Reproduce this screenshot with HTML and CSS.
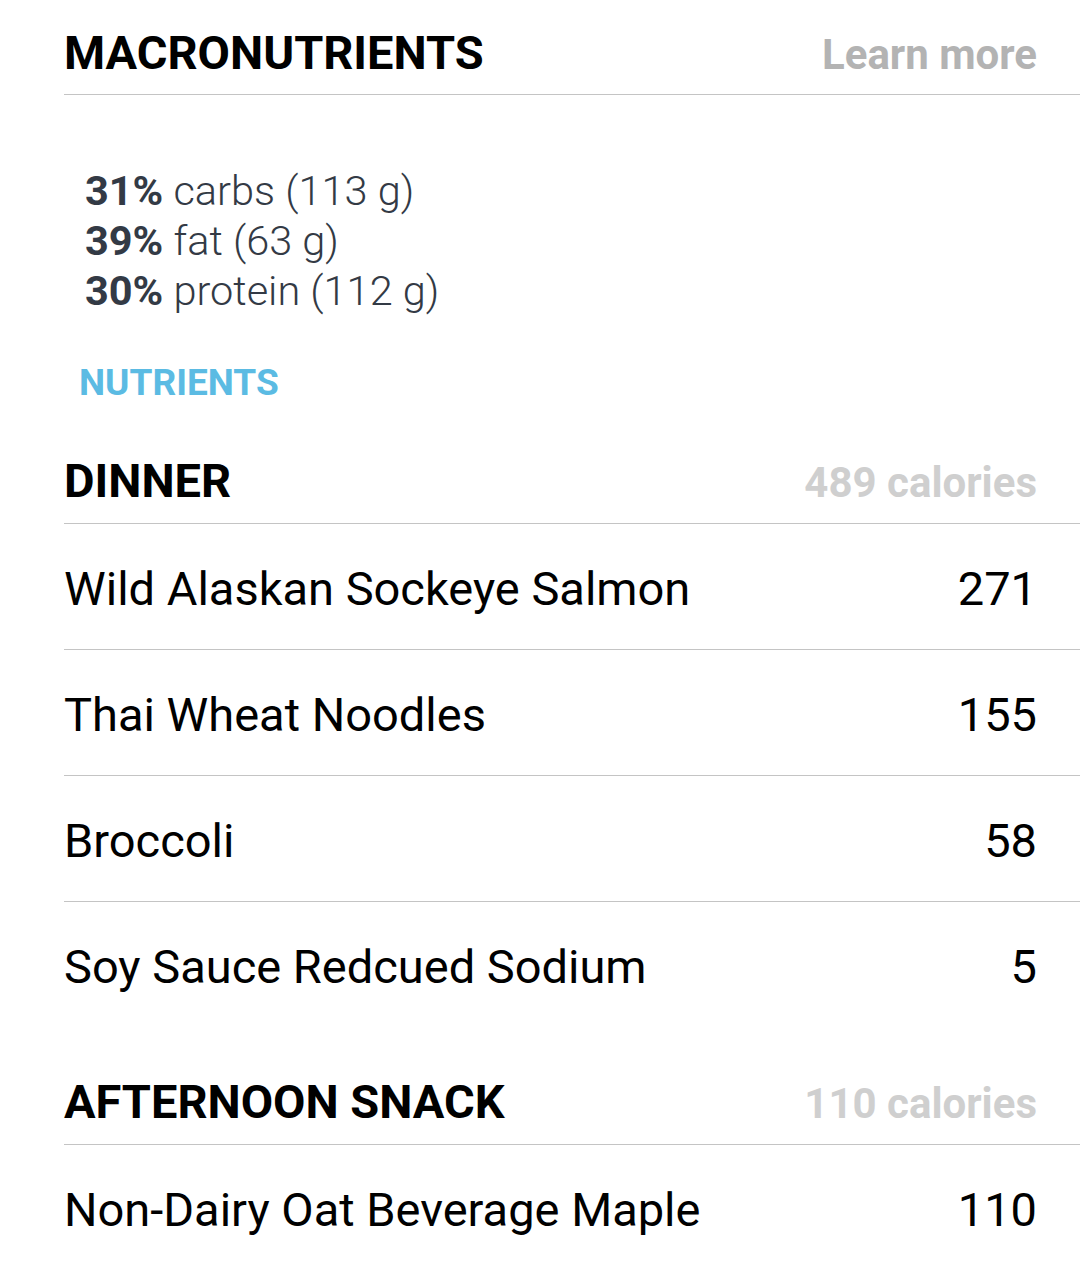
FILE: index.html
```html
<!DOCTYPE html>
<html>
<head>
<meta charset="utf-8">
<link rel="stylesheet" href="styles.css">
</head>
<body>
<div class="page">
  <div class="head head-top">
    <span class="title">MACRONUTRIENTS</span>
    <span class="learn">Learn more</span>
  </div>
  <div class="macros">
    <div><b>31%</b> carbs (113 g)</div>
    <div><b>39%</b> fat (63 g)</div>
    <div><b>30%</b> protein (112 g)</div>
  </div>
  <div class="nutrients">NUTRIENTS</div>

  <div class="head meal-head">
    <span class="title">DINNER</span>
    <span class="cal">489 calories</span>
  </div>
  <div class="row"><span>Wild Alaskan Sockeye Salmon</span><span>271</span></div>
  <div class="row"><span>Thai Wheat Noodles</span><span>155</span></div>
  <div class="row"><span>Broccoli</span><span>58</span></div>
  <div class="row last"><span>Soy Sauce Redcued Sodium</span><span>5</span></div>

  <div class="head meal-head">
    <span class="title">AFTERNOON SNACK</span>
    <span class="cal">110 calories</span>
  </div>
  <div class="row last"><span>Non-Dairy Oat Beverage Maple</span><span>110</span></div>
</div>
</body>
</html>
```

FILE: styles.css
```css
html, body {
  margin: 0;
  padding: 0;
  background: #ffffff;
}
body {
  font-family: Roboto, "Noto Sans", sans-serif;
  color: #000;
}
.page {
  padding-left: 64px;
}
.head {
  display: flex;
  justify-content: space-between;
  align-items: baseline;
  padding-right: 43px;
  border-bottom: 1px solid #c4c4c4;
}
.head-top {
  padding-top: 25px;
  padding-bottom: 11px;
  line-height: 56px;
}
.title {
  font-weight: 700;
  font-size: 47px;
  color: #000;
}
.learn {
  font-weight: 700;
  font-size: 42px;
  color: #b3b3b3;
}
.macros {
  margin-top: 71px;
  padding-left: 21px;
  font-size: 41.5px;
  line-height: 50px;
  font-weight: 300;
  color: #333a45;
}
.macros b {
  font-weight: 700;
}
.nutrients {
  margin-top: 47px;
  padding-left: 15px;
  font-size: 37px;
  line-height: 40px;
  font-weight: 700;
  color: #5bbbe3;
}
.meal-head {
  margin-top: 53px;
  line-height: 50px;
  padding-bottom: 15px;
}
.cal {
  font-weight: 700;
  font-size: 42px;
  color: #cfcfcf;
}
.row {
  display: flex;
  justify-content: space-between;
  align-items: center;
  height: 121px;
  padding-top: 4px;
  padding-right: 43px;
  border-bottom: 1px solid #c4c4c4;
  font-size: 47px;
  color: #000;
}
.row.last {
  border-bottom: none;
}
.row.last + .meal-head {
  margin-top: 50px;
}
```
